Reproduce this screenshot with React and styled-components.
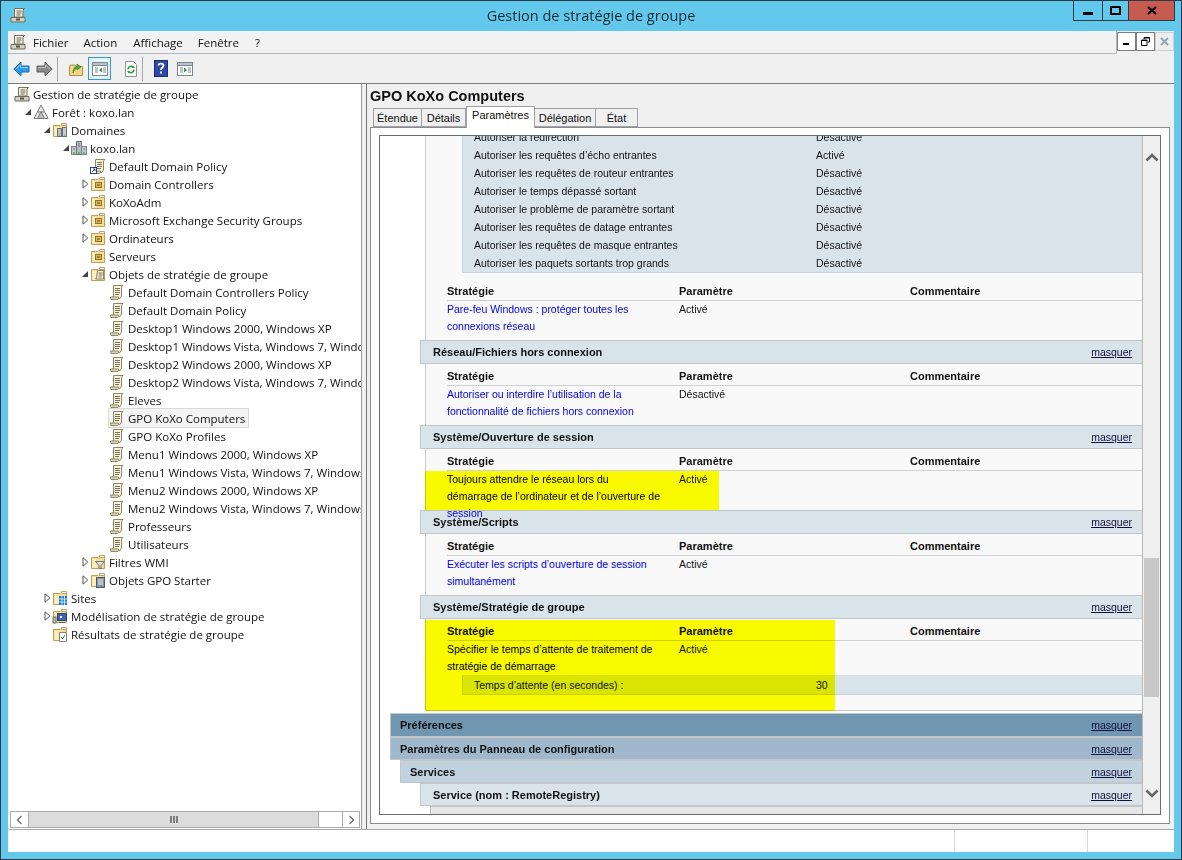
import React from "react";
import styled, { createGlobalStyle } from "styled-components";

const Global = createGlobalStyle`
  html, body { margin: 0; padding: 0; }
  body { width: 1182px; height: 860px; overflow: hidden; font-family: "Open Sans", "Liberation Sans", sans-serif; }
  * { box-sizing: border-box; }
`;

const Screen = styled.div`
  width: 1182px;
  height: 860px;
  background: #63c9ec;
  border: 1px solid #2b3a44;
  display: flex;
  flex-direction: column;
`;
const TitleBar = styled.div`
  height: 30px;
  flex: none;
  display: grid;
  grid-template-columns: 1fr auto 1fr;
  align-items: start;
`;
const TitleIcon = styled.div`
  padding: 6px 0 0 9px;
`;
const Title = styled.div`
  font-size: 14.5px;
  line-height: 30px;
  color: #1a2a33;
`;
const WinButtons = styled.div`
  justify-self: end;
  display: flex;
  height: 21px;
  margin-right: 6px;
  margin-top: -1px;
  border: 1px solid #2b3a44;
`;
const WinButton = styled.div`
  width: ${(p) => p.$w}px;
  display: flex;
  align-items: center;
  justify-content: center;
  background: ${(p) => (p.$close ? "#c75b50" : "transparent")};
  border-left: ${(p) => (p.$first ? "none" : "1px solid #2b3a44")};
`;
const Client = styled.div`
  margin: 0 7px 7px 7px;
  flex: 1;
  min-height: 0;
  background: #f0f0f0;
  display: flex;
  flex-direction: column;
`;
const MenuBar = styled.div`
  height: 23px;
  flex: none;
  display: flex;
`;
const MenuLeft = styled.div`
  flex: 1;
  display: flex;
  align-items: center;
  padding-left: 2px;
  border-bottom: 1px solid #b4b7bd;
  border-right: 1px solid #b4b7bd;
  background: #f2f2f2;
`;
const MenuItem = styled.span`
  font-size: 11.5px;
  color: #111;
  margin-left: ${(p) => p.$gap}px;
`;
const MdiButtons = styled.div`
  display: flex;
  gap: 0;
  padding-top: 1px;
  height: 21px;
`;
const MdiButton = styled.div`
  width: 19px;
  height: 19px;
  display: flex;
  align-items: center;
  justify-content: center;
  background: ${(p) => (p.$off ? "#eeeeee" : "#ffffff")};
  border: 1px solid ${(p) => (p.$off ? "#d0d0d0" : "#7f7f7f")};
`;
const Toolbar = styled.div`
  height: 30px;
  flex: none;
  display: flex;
  align-items: center;
  padding-left: 5px;
  border-bottom: 1px solid #7a7a7a;
`;
const ToolButton = styled.div`
  height: 23px;
  width: ${(p) => p.$w || 23}px;
  flex: none;
  display: flex;
  align-items: center;
  justify-content: center;
  background: ${(p) => (p.$on ? "#e5f3fb" : "transparent")};
  border: ${(p) => (p.$on ? "1px solid #3399dd" : "none")};
`;
const ToolSep = styled.div`
  width: 1px;
  height: 24px;
  background: #a8a8a8;
  margin: 0 ${(p) => p.$r || 4}px 0 ${(p) => p.$l || 4}px;
`;
const Main = styled.div`
  flex: 1;
  min-height: 0;
  display: flex;
`;
const LeftPane = styled.div`
  width: 353px;
  flex: none;
  margin-left: 1px;
  background: #fff;
  border-right: 1px solid #9a9a9a;
  display: flex;
  flex-direction: column;
`;
const Tree = styled.div`
  flex: 1;
  min-height: 0;
  overflow: hidden;
  padding-top: 1px;
`;
const TreeRow = styled.div`
  height: 18px;
  display: flex;
  align-items: center;
  white-space: nowrap;
  margin-left: ${(p) => p.$depth * 19 - 9}px;
`;
const Twisty = styled.div`
  width: 14px;
  height: 18px;
  flex: none;
  display: flex;
  align-items: center;
  justify-content: center;
  padding-left: 4px;
`;
const TreeNode = styled.div`
  display: flex;
  align-items: center;
  gap: 3px;
  height: 18px;
  padding-right: 3px;
  font-size: 11.5px;
  color: #111;
  background: ${(p) => (p.$selected ? "#f4f4f4" : "transparent")};
  outline: ${(p) => (p.$selected ? "1px solid #d9d9d9" : "none")};
`;
const HScroll = styled.div`
  height: 17px;
  flex: none;
  margin: 0 1px 1px 1px;
  display: flex;
  border: 1px solid #ababab;
`;
const HArrow = styled.div`
  width: 17px;
  flex: none;
  display: flex;
  align-items: center;
  justify-content: center;
  border-left: ${(p) => (p.$right ? "1px solid #ababab" : "none")};
`;
const HThumb = styled.div`
  width: 291px;
  flex: none;
  background: #dcdcdc;
  border-left: 1px solid #ababab;
  border-right: 1px solid #ababab;
  display: flex;
  align-items: center;
  justify-content: center;
`;
const HTrack = styled.div`
  flex: 1;
`;
const RightPane = styled.div`
  flex: 1;
  min-width: 0;
  margin-left: 4px;
  border-left: 1px solid #777;
  padding-left: 3px;
  padding-right: 4px;
  padding-bottom: 5px;
  display: flex;
  flex-direction: column;
`;
const PaneTitle = styled.div`
  height: 23px;
  flex: none;
  font-family: "Liberation Sans", sans-serif;
  font-size: 14.5px;
  font-weight: bold;
  line-height: 24px;
  color: #111;
`;
const Tabs = styled.div`
  height: 20px;
  flex: none;
  display: flex;
  align-items: flex-end;
  padding-left: 3px;
`;
const Tab = styled.div`
  height: ${(p) => (p.$active ? 22 : 19)}px;
  width: ${(p) => p.$w}px;
  margin-bottom: ${(p) => (p.$active ? -1 : 0)}px;
  background: ${(p) => (p.$active ? "#fff" : "#f0f0f0")};
  border: 1px solid #a0a0a0;
  border-bottom: ${(p) => (p.$active ? "none" : "1px solid #a0a0a0")};
  border-left: ${(p) => (p.$active || p.$first ? "1px solid #a0a0a0" : "none")};
  font-family: "Liberation Sans", sans-serif;
  font-size: 11px;
  line-height: ${(p) => (p.$active ? 17 : 19)}px;
  text-align: center;
  color: #111;
  position: relative;
  z-index: 1;
`;
const Panel = styled.div`
  flex: 1;
  min-height: 0;
  background: #fff;
  border: 1px solid #8b8b93;
  padding: 7px 8px 8px 8px;
  display: flex;
`;
const Report = styled.div`
  flex: 1;
  min-width: 0;
  border: 1px solid #6b6b6b;
  display: flex;
`;
const ReportScroll = styled.div`
  flex: 1;
  min-width: 0;
  overflow: hidden;
  font-family: "Liberation Sans", sans-serif;
  font-size: 10.5px;
  color: #111;
`;
const ReportInner = styled.div`
  margin-top: -8px;
`;
const VScroll = styled.div`
  width: 18px;
  flex: none;
  background: #f0f0f0;
  border-left: 1px solid #b8b8b8;
  display: flex;
  flex-direction: column;
`;
const VArrow = styled.div`
  height: 42px;
  flex: none;
  display: flex;
  align-items: center;
  justify-content: center;
`;
const VTrack = styled.div`
  flex: 1;
  padding: 380px 1px 0 1px;
`;
const VThumb = styled.div`
  height: 139px;
  background: #c8c8c8;
`;
const Body = styled.div`
  position: relative;
  margin-left: 45px;
  background: #f9f9f9;
  border-left: 1px solid #c8c8c8;
  border-bottom: ${(p) => (p.$closed ? "1px solid #c8c8c8" : "none")};
  padding-bottom: ${(p) => p.$pb ?? 5}px;
`;
const SubBlock = styled.div`
  margin-left: 36px;
  background: #d9e4ea;
  border-left: 1px solid #c8d2d8;
  border-bottom: 1px solid #c8d2d8;
`;
const SubRow = styled.div`
  height: ${(p) => p.$h || 18}px;
  display: grid;
  grid-template-columns: 342px 1fr;
  align-items: center;
  padding-left: 11px;
`;
const TableHead = styled.div`
  height: 22px;
  margin-left: 21px;
  display: grid;
  grid-template-columns: 232px 231px 1fr;
  align-items: end;
  border-bottom: 1px solid #d0d0d0;
  font-weight: bold;
  font-size: 11px;
  line-height: 17px;
  margin-top: ${(p) => p.$mt || 0}px;
  color: #111;
`;
const TableRow = styled.div`
  margin-left: 21px;
  display: grid;
  grid-template-columns: 232px 231px 1fr;
  line-height: 17px;
  height: 34px;
`;
const PolicyName = styled.div`
  width: 214px;
  color: #0000e6;
`;
const Head = styled.div`
  height: ${(p) => p.$h || 24}px;
  margin-left: ${(p) => p.$indent}px;
  margin-top: ${(p) => p.$mt || 0}px;
  background: ${(p) => p.$bg || "#d9e4ea"};
  border-top: 1px solid #c2c6ca;
  border-bottom: 1px solid #c2c6ca;
  border-left: 1px solid #c2c6ca;
  display: flex;
  align-items: center;
  justify-content: space-between;
  padding: 0 10px 0 ${(p) => p.$pl || 12}px;
  font-weight: bold;
  font-size: 11px;
  color: #111;
`;
const Masquer = styled.span`
  font-weight: normal;
  font-size: 10.5px;
  color: #10103c;
  text-decoration: underline;
`;
const Marker = styled.div`
  position: absolute;
  left: -1px;
  top: ${(p) => p.$top}px;
  bottom: ${(p) => p.$bottom}px;
  width: ${(p) => p.$w}px;
  background: #ffff00;
  mix-blend-mode: multiply;
`;
const StatusBar = styled.div`
  height: 23px;
  flex: none;
  background: #fff;
  border-top: 1px solid #a8a8a8;
  margin-left: 1px;
  display: flex;
  justify-content: flex-end;
`;
const StatusCell = styled.div`
  width: ${(p) => p.$w}px;
  border-left: 1px solid #d8d8d8;
`;

const Svg = ({ children, w = 16, h = 16 }) => (
  <svg width={w} height={h} viewBox={`0 0 ${w} ${h}`} style={{ flex: "none", display: "block" }}>
    {children}
  </svg>
);

const ScrollShape = ({ x = 0 }) => (
  <g transform={`translate(${x} 0)`}>
    <path d="M4.5 1.5h9.5l-1.5 1.5v9l-1.5 2.5H2.5l1-1.5h.5l.5-1z" fill="#f8f3dd" stroke="#8d8666" />
    <path d="M1.5 13h8v1.5l-1 1h-6.5z" fill="#e4d9ae" stroke="#8d8666" />
    <path d="M6 4.5h5M6 6.5h5M6 8.5h5M6 10.5h4" stroke="#77715a" />
  </g>
);
const IconPolicy = () => <Svg><ScrollShape /></Svg>;
const IconLinked = () => (
  <Svg>
    <ScrollShape x={1} />
    <rect x="0.5" y="9.5" width="6" height="6" fill="#fff" stroke="#27408f" />
    <path d="M2 14l3-3M3 11h2v2" stroke="#27408f" fill="none" />
  </Svg>
);
const IconRoot = () => (
  <Svg>
    <path d="M4.5 1.5h10l-1.5 1.5v7h-8.5z" fill="#f6f1dc" stroke="#77715a" />
    <path d="M6.5 4h5M6.5 6h5M6.5 8h4" stroke="#6b6b60" />
    <path d="M1 10.5h14v4.5H1z" fill="#d4d0bd" stroke="#6f6c5b" />
    <rect x="6" y="11.5" width="4" height="2" fill="#55544a" />
  </Svg>
);
const FolderBase = ({ children }) => (
  <Svg>
    <path d="M1.5 3.5V14.5H14.5V2.5H9l-1 1z" fill="#f7dd96" stroke="#c19d52" />
    <path d="M9.5 1.5h5v2h-5z" fill="#fdfdf6" stroke="#b6a371" />
    <path d="M2.5 5h4v9h-4z" fill="#fbeec2" />
    {children}
  </Svg>
);
const IconOU = () => (
  <FolderBase>
    <rect x="5.5" y="6.5" width="6" height="5" fill="#e0b75a" stroke="#8d7330" />
    <path d="M7 9h3" stroke="#5c4a1d" />
  </FolderBase>
);
const IconGpoFolder = () => (
  <FolderBase>
    <path d="M7.5 4.5h7l-1 1v7.5H5.5l1-1z" fill="#f8f3dd" stroke="#8d8666" />
    <path d="M8.5 7h4M8.5 9h4M8.5 11h3" stroke="#77715a" />
  </FolderBase>
);
const IconDomains = () => (
  <FolderBase>
    <rect x="5.5" y="6.5" width="4" height="8" fill="#b9bec2" stroke="#6b7176" />
    <rect x="10.5" y="5.5" width="4" height="9" fill="#c9cdd1" stroke="#6b7176" />
    <path d="M7 13h1M12 13h1" stroke="#3fb53f" />
  </FolderBase>
);
const IconDomain = () => (
  <Svg>
    <rect x="0.5" y="6.5" width="5" height="8" fill="#c3c8cc" stroke="#7c8388" />
    <rect x="5.5" y="1.5" width="5" height="13" fill="#b5bbc0" stroke="#6e757a" />
    <rect x="10.5" y="6.5" width="5" height="8" fill="#c3c8cc" stroke="#7c8388" />
    <path d="M2 9h2M7 4h2M7 6h2M12 9h2" stroke="#6e757a" />
    <path d="M2 13h2M7 13h2M12 13h2" stroke="#35c135" strokeWidth="1.4" />
  </Svg>
);
const IconForest = () => (
  <Svg>
    <path d="M8 1l7 13.5H1z" fill="#e9e9e9" stroke="#7a7a7a" />
    <path d="M8 7.5L4.5 14.5h7zM5 8h6" fill="#bdbdbd" stroke="#7a7a7a" />
  </Svg>
);
const IconFilter = () => (
  <FolderBase>
    <path d="M5.5 7.5h9l-3.5 4v3.5l-2-1v-2.5z" fill="#dfe3e6" stroke="#6b7176" />
  </FolderBase>
);
const IconStarter = () => (
  <FolderBase>
    <rect x="6.5" y="5.5" width="8" height="10" fill="#8795a5" stroke="#4f5b69" />
    <path d="M8 8h5M8 10h5M8 12h5" stroke="#e8edf2" />
  </FolderBase>
);
const IconSites = () => (
  <FolderBase>
    <rect x="7" y="6" width="8" height="9" fill="#1f7ad1" />
    <path d="M7 9h8M7 12h8M10 6v9M12.5 6v9" stroke="#fff" strokeWidth=".7" />
  </FolderBase>
);
const IconModel = () => (
  <FolderBase>
    <rect x="1" y="9" width="3" height="6" fill="#b7c6a8" stroke="#67705c" />
    <rect x="5.5" y="5.5" width="9" height="7" fill="#3d63b5" stroke="#2b3f78" />
    <path d="M8 8h2v2H8z" fill="#fff" />
    <path d="M7 14.5h6" stroke="#555" />
  </FolderBase>
);
const IconResults = () => (
  <FolderBase>
    <path d="M7.5 6.5h7v9h-7z" fill="#fff" stroke="#7e8890" />
    <path d="M9 11l1.5 2 2.5-4" stroke="#3a8a3a" fill="none" />
  </FolderBase>
);

const Open = () => (
  <Svg w={8} h={8}><path d="M7 1v6H1z" fill="#444" /></Svg>
);
const Closed = () => (
  <Svg w={7} h={10}><path d="M1 .8l4.8 4.2L1 9.2z" fill="#fff" stroke="#555" /></Svg>
);

const ArrowIcon = ({ flip, fill, stroke }) => (
  <svg width="17" height="16" viewBox="0 0 17 16" style={{ transform: flip ? "scaleX(-1)" : "none", display: "block" }}>
    <path d="M.8 8L8 1.2V5h8v6H8v3.8z" fill={fill} stroke={stroke} />
    <path d="M3 8L7.5 4v2.5H15" fill="none" stroke="#ffffff" strokeOpacity=".45" />
  </svg>
);
const UpFolder = () => (
  <Svg>
    <path d="M1.5 5.5V14.5H14.5V5.5H8l-1-1.5H2.5z" fill="#f3d488" stroke="#b5903f" />
    <path d="M5 12C5 8 7 5.5 9 5V3l4 3-4 3V7C7.5 7.6 6 9 5 12z" fill="#4caf35" stroke="#2f7d23" strokeWidth=".7" />
  </Svg>
);
const PaneIcon = ({ right }) => (
  <Svg w={18} h={16}>
    <rect x="1.5" y="1.5" width="15" height="13" fill="#fff" stroke="#7d8790" />
    <rect x="1.5" y="1.5" width="15" height="3" fill="#b9c3cb" stroke="#7d8790" />
    <path d="M4 7h3M4 9h3M4 11h3M12 7h3M12 9h3M12 11h3" stroke="#7d8790" />
    {right
      ? <path d="M8 6.5l3 2.5-3 2.5z" fill="#2f9e2f" />
      : <path d="M11 6.5L8 9l3 2.5z" fill="#2f9e2f" />}
  </Svg>
);
const RefreshIcon = () => (
  <Svg>
    <path d="M2.5.5h8l3 3v12h-11z" fill="#fff" stroke="#8d9399" />
    <path d="M5 8.5a3.2 3.2 0 0 1 5.6-2M11 8.5a3.2 3.2 0 0 1-5.6 2" fill="none" stroke="#2f9e3a" strokeWidth="1.6" />
    <path d="M10 4.5l2 2.5h-3zM6 12.5L4 10h3z" fill="#2f9e3a" />
  </Svg>
);
const HelpIcon = () => (
  <Svg w={14} h={17}>
    <rect x=".5" y=".5" width="13" height="16" fill="#2f49a8" stroke="#1d2d70" />
    <path d="M4.5 5.5C4.5 3 9.5 3 9.5 5.5 9.5 7.5 7 7.5 7 10" fill="none" stroke="#fff" strokeWidth="1.8" />
    <rect x="6" y="11.5" width="2" height="2" fill="#fff" />
  </Svg>
);

const tree = [
  { d: 0, icon: IconRoot, t: "Gestion de stratégie de groupe" },
  { d: 1, tw: "o", icon: IconForest, t: "Forêt : koxo.lan" },
  { d: 2, tw: "o", icon: IconDomains, t: "Domaines" },
  { d: 3, tw: "o", icon: IconDomain, t: "koxo.lan" },
  { d: 4, icon: IconLinked, t: "Default Domain Policy" },
  { d: 4, tw: "c", icon: IconOU, t: "Domain Controllers" },
  { d: 4, tw: "c", icon: IconOU, t: "KoXoAdm" },
  { d: 4, tw: "c", icon: IconOU, t: "Microsoft Exchange Security Groups" },
  { d: 4, tw: "c", icon: IconOU, t: "Ordinateurs" },
  { d: 4, icon: IconOU, t: "Serveurs" },
  { d: 4, tw: "o", icon: IconGpoFolder, t: "Objets de stratégie de groupe" },
  { d: 5, icon: IconPolicy, t: "Default Domain Controllers Policy" },
  { d: 5, icon: IconPolicy, t: "Default Domain Policy" },
  { d: 5, icon: IconPolicy, t: "Desktop1 Windows 2000, Windows XP" },
  { d: 5, icon: IconPolicy, t: "Desktop1 Windows Vista, Windows 7, Windows 8" },
  { d: 5, icon: IconPolicy, t: "Desktop2 Windows 2000, Windows XP" },
  { d: 5, icon: IconPolicy, t: "Desktop2 Windows Vista, Windows 7, Windows 8" },
  { d: 5, icon: IconPolicy, t: "Eleves" },
  { d: 5, icon: IconPolicy, t: "GPO KoXo Computers", selected: true },
  { d: 5, icon: IconPolicy, t: "GPO KoXo Profiles" },
  { d: 5, icon: IconPolicy, t: "Menu1 Windows 2000, Windows XP" },
  { d: 5, icon: IconPolicy, t: "Menu1 Windows Vista, Windows 7, Windows 8" },
  { d: 5, icon: IconPolicy, t: "Menu2 Windows 2000, Windows XP" },
  { d: 5, icon: IconPolicy, t: "Menu2 Windows Vista, Windows 7, Windows 8" },
  { d: 5, icon: IconPolicy, t: "Professeurs" },
  { d: 5, icon: IconPolicy, t: "Utilisateurs" },
  { d: 4, tw: "c", icon: IconFilter, t: "Filtres WMI" },
  { d: 4, tw: "c", icon: IconStarter, t: "Objets GPO Starter" },
  { d: 2, tw: "c", icon: IconSites, t: "Sites" },
  { d: 2, tw: "c", icon: IconModel, t: "Modélisation de stratégie de groupe" },
  { d: 2, icon: IconResults, t: "Résultats de stratégie de groupe" },
];

const firewall = [
  ["Autoriser la redirection", "Désactivé"],
  ["Autoriser les requêtes d’écho entrantes", "Activé"],
  ["Autoriser les requêtes de routeur entrantes", "Désactivé"],
  ["Autoriser le temps dépassé sortant", "Désactivé"],
  ["Autoriser le problème de paramètre sortant", "Désactivé"],
  ["Autoriser les requêtes de datage entrantes", "Désactivé"],
  ["Autoriser les requêtes de masque entrantes", "Désactivé"],
  ["Autoriser les paquets sortants trop grands", "Désactivé"],
];

const sections = [
  { title: "Réseau/Fichiers hors connexion", name: "Autoriser ou interdire l’utilisation de la fonctionnalité de fichiers hors connexion", value: "Désactivé" },
  { title: "Système/Ouverture de session", name: "Toujours attendre le réseau lors du démarrage de l’ordinateur et de l’ouverture de session", value: "Activé", mark: { top: 22, bottom: 0, w: 294 } },
  { title: "Système/Scripts", name: "Exécuter les scripts d’ouverture de session simultanément", value: "Activé" },
];

const TableHeader = ({ mt }) => (
  <TableHead $mt={mt}>
    <span>Stratégie</span>
    <span>Paramètre</span>
    <span>Commentaire</span>
  </TableHead>
);

const App = () => (
  <>
    <Global />
    <Screen>
      <TitleBar>
        <TitleIcon><IconRoot /></TitleIcon>
        <Title>Gestion de stratégie de groupe</Title>
        <WinButtons>
          <WinButton $w={28} $first>
            <svg width="10" height="10"><rect x="0" y="6" width="10" height="3" fill="#000" /></svg>
          </WinButton>
          <WinButton $w={26}>
            <svg width="11" height="9"><rect x="1" y="1" width="9" height="7" fill="none" stroke="#000" strokeWidth="2" /></svg>
          </WinButton>
          <WinButton $w={46} $close>
            <svg width="10" height="9"><path d="M1 1l8 7M9 1L1 8" stroke="#000" strokeWidth="2.2" /></svg>
          </WinButton>
        </WinButtons>
      </TitleBar>
      <Client>
        <MenuBar>
          <MenuLeft>
            <IconRoot />
            <MenuItem $gap={7}>Fichier</MenuItem>
            <MenuItem $gap={15}>Action</MenuItem>
            <MenuItem $gap={16}>Affichage</MenuItem>
            <MenuItem $gap={15}>Fenêtre</MenuItem>
            <MenuItem $gap={16}>?</MenuItem>
          </MenuLeft>
          <MdiButtons>
            <MdiButton>
              <svg width="8" height="8"><rect x="0" y="5" width="6" height="2" fill="#000" /></svg>
            </MdiButton>
            <MdiButton>
              <svg width="9" height="9"><path d="M3 2V.5h5.5v4.5H7M.5 3h5.5v5.5H.5z" fill="none" stroke="#000" /><path d="M.5 3.5h5.5M3 1h5.5" stroke="#000" /></svg>
            </MdiButton>
            <MdiButton $off>
              <svg width="9" height="9"><path d="M1 1l7 7M8 1L1 8" stroke="#9aa3ae" strokeWidth="2" /></svg>
            </MdiButton>
          </MdiButtons>
        </MenuBar>
        <Toolbar>
          <ToolButton $w={17}><ArrowIcon fill="#2f9be8" stroke="#1a6bb0" /></ToolButton>
          <ToolButton $w={6} />
          <ToolButton $w={17}><ArrowIcon flip fill="#8a8a8a" stroke="#5d5d5d" /></ToolButton>
          <ToolSep $l={4} $r={11} />
          <ToolButton $w={14}><UpFolder /></ToolButton>
          <ToolButton $w={5} />
          <ToolButton $w={23} $on><PaneIcon /></ToolButton>
          <ToolButton $w={13} />
          <ToolButton $w={14}><RefreshIcon /></ToolButton>
          <ToolSep $l={4} $r={11} />
          <ToolButton $w={14}><HelpIcon /></ToolButton>
          <ToolButton $w={8} />
          <ToolButton $w={18}><PaneIcon right /></ToolButton>
        </Toolbar>
        <Main>
          <LeftPane>
            <Tree>
              {tree.map((n) => {
                const Icon = n.icon;
                return (
                  <TreeRow key={n.t} $depth={n.d}>
                    <Twisty>
                      {n.tw === "o" && <Open />}
                      {n.tw === "c" && <Closed />}
                    </Twisty>
                    <TreeNode $selected={n.selected}>
                      <Icon />
                      <span>{n.t}</span>
                    </TreeNode>
                  </TreeRow>
                );
              })}
            </Tree>
            <HScroll>
              <HArrow>
                <svg width="7" height="10"><path d="M5.5 1L1.5 5l4 4" fill="none" stroke="#666" strokeWidth="1.2" /></svg>
              </HArrow>
              <HThumb>
                <svg width="8" height="7"><path d="M1 0v7M4 0v7M7 0v7" stroke="#555" strokeWidth="1.4" /></svg>
              </HThumb>
              <HTrack />
              <HArrow $right>
                <svg width="7" height="10"><path d="M1.5 1l4 4-4 4" fill="none" stroke="#666" strokeWidth="1.2" /></svg>
              </HArrow>
            </HScroll>
          </LeftPane>
          <RightPane>
            <PaneTitle>GPO KoXo Computers</PaneTitle>
            <Tabs>
              <Tab $w={49} $first>Étendue</Tab>
              <Tab $w={44}>Détails</Tab>
              <Tab $w={69} $active>Paramètres</Tab>
              <Tab $w={61}>Délégation</Tab>
              <Tab $w={42}>État</Tab>
            </Tabs>
            <Panel>
              <Report>
                <ReportScroll>
                  <ReportInner>
                    <Body>
                      <SubBlock>
                        {firewall.map(([name, value]) => (
                          <SubRow key={name}>
                            <span>{name}</span>
                            <span>{value}</span>
                          </SubRow>
                        ))}
                      </SubBlock>
                      <TableHeader mt={6} />
                      <TableRow>
                        <PolicyName>Pare-feu Windows : protéger toutes les connexions réseau</PolicyName>
                        <span>Activé</span>
                      </TableRow>
                    </Body>
                    {sections.map((s) => (
                      <React.Fragment key={s.title}>
                        <Head $indent={40}>
                          <span>{s.title}</span>
                          <Masquer>masquer</Masquer>
                        </Head>
                        <Body>
                          <TableHeader />
                          <TableRow>
                            <PolicyName>{s.name}</PolicyName>
                            <span>{s.value}</span>
                          </TableRow>
                          {s.mark && <Marker $top={s.mark.top} $bottom={s.mark.bottom} $w={s.mark.w} />}
                        </Body>
                      </React.Fragment>
                    ))}
                    <Head $indent={40}>
                      <span>Système/Stratégie de groupe</span>
                      <Masquer>masquer</Masquer>
                    </Head>
                    <Body $closed $pb={15}>
                      <TableHeader />
                      <TableRow>
                        <PolicyName>Spécifier le temps d’attente de traitement de stratégie de démarrage</PolicyName>
                        <span>Activé</span>
                      </TableRow>
                      <SubBlock>
                        <SubRow $h={19}>
                          <span>Temps d’attente (en secondes) :</span>
                          <span>30</span>
                        </SubRow>
                      </SubBlock>
                      <Marker $top={1} $bottom={-1} $w={410} />
                    </Body>
                    <Head $indent={10} $pl={9} $bg="#7096b2" $mt={2}>
                      <span>Préférences</span>
                      <Masquer>masquer</Masquer>
                    </Head>
                    <Head $indent={10} $pl={9} $bg="#a0b8cc" $h={23}>
                      <span>Paramètres du Panneau de configuration</span>
                      <Masquer>masquer</Masquer>
                    </Head>
                    <Head $indent={20} $pl={9} $bg="#bfd2de" $h={23}>
                      <span>Services</span>
                      <Masquer>masquer</Masquer>
                    </Head>
                    <Head $indent={40} $bg="#d9e4ea" $h={23}>
                      <span>Service (nom : RemoteRegistry)</span>
                      <Masquer>masquer</Masquer>
                    </Head>
                    <Head $indent={50} $bg="#e6e6e6" $h={23}>
                      <span>Remote Registry (ordre : 1)</span>
                    </Head>
                  </ReportInner>
                </ReportScroll>
                <VScroll>
                  <VArrow>
                    <svg width="14" height="9"><path d="M1.5 7.5L7 2l5.5 5.5" fill="none" stroke="#666" strokeWidth="2.6" /></svg>
                  </VArrow>
                  <VTrack><VThumb /></VTrack>
                  <VArrow>
                    <svg width="14" height="9"><path d="M1.5 1.5L7 7l5.5-5.5" fill="none" stroke="#666" strokeWidth="2.6" /></svg>
                  </VArrow>
                </VScroll>
              </Report>
            </Panel>
          </RightPane>
        </Main>
        <StatusBar>
          <StatusCell $w={133} />
          <StatusCell $w={87} />
        </StatusBar>
      </Client>
    </Screen>
  </>
);

export default App;
